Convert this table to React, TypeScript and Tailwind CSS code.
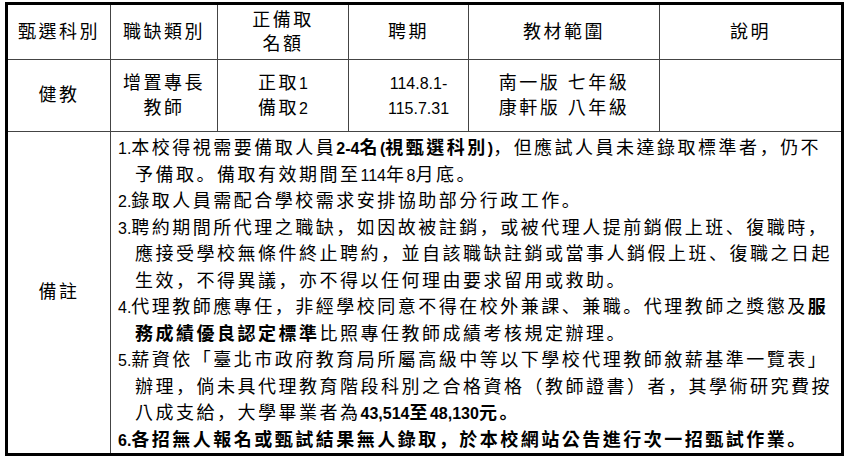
import React from "react";

// Latin runs are set smaller and without the CJK tracking
const L = ({ children, b }: { children: React.ReactNode; b?: boolean }) => (
  <span className={`text-[16px] leading-none tracking-normal ${b ? "font-bold" : ""}`}>{children}</span>
);

// the source sets full-width punctuation low and to the left
const t = (s: string) =>
  s.split(/([，。、])/).map((p, i) =>
    p && "，。、".includes(p) ? (
      <span key={i} className="leading-none font-['Noto_Sans_CJK_JP',sans-serif]">
        {p}
      </span>
    ) : (
      p
    )
  );

const head = "h-[55px] flex items-center justify-center text-center leading-[24px] border-b border-[#444]";
const data = "h-[72px] flex items-center justify-center text-center leading-[25px] border-b border-[#444]";

export default function App() {
  return (
    <div className="w-[847px] h-[460px] bg-white pt-[2px] pl-[5px] font-['Liberation_Sans','Noto_Sans_CJK_TC',sans-serif] text-black">
      <div className="w-[839px] border-[3px] border-black grid grid-cols-[103px_107px_131px_120px_191px_181px] text-[18px] tracking-[2.5px]">
        {/* header */}
        <div className={`${head} border-r`}>甄選科別</div>
        <div className={`${head} border-r`}>職缺類別</div>
        <div className={`${head} border-r`}>
          <div>
            正備取
            <br />
            名額
          </div>
        </div>
        <div className={`${head} border-r`}>聘期</div>
        <div className={`${head} border-r`}>教材範圍</div>
        <div className={head}>說明</div>

        {/* data row */}
        <div className={`${data} border-r`}>健教</div>
        <div className={`${data} border-r`}>
          <div>
            增置專長
            <br />
            教師
          </div>
        </div>
        <div className={`${data} border-r`}>
          <div>
            正取<L>1</L>
            <br />
            備取<L>2</L>
          </div>
        </div>
        <div className={`${data} border-r pl-5`}>
          <div>
            <L>114.8.1-</L>
            <br />
            <L>115.7.31</L>
          </div>
        </div>
        <div className={`${data} border-r`}>
          <div>
            南一版 七年級
            <br />
            康軒版 八年級
          </div>
        </div>
        <div className={data}></div>

        {/* remarks */}
        <div className="h-[321px] flex items-center justify-center border-r border-[#444]">備註</div>
        <div className="col-span-5 h-[321px] pl-[7px] pt-[3px] leading-[26.5px] whitespace-nowrap">
          <div>
            <L>1.</L>本校得視需要備取人員
            <span className="font-bold">
              <L b>2-4</L>名<L b>(</L>視甄選科別<L b>)</L>
            </span>
            {t("，但應試人員未達錄取標準者，仍不")}
          </div>
          <div className="pl-[17px]">
            {t("予備取。備取有效期間至")}<L>114</L>年<L>8</L>{t("月底。")}
          </div>
          <div>
            <L>2.</L>{t("錄取人員需配合學校需求安排協助部分行政工作。")}
          </div>
          <div>
            <L>3.</L>{t("聘約期間所代理之職缺，如因故被註銷，或被代理人提前銷假上班、復職時，")}
          </div>
          <div className="pl-[17px]">
            {t("應接受學校無條件終止聘約，並自該職缺註銷或當事人銷假上班、復職之日起")}
          </div>
          <div className="pl-[17px]">{t("生效，不得異議，亦不得以任何理由要求留用或救助。")}</div>
          <div>
            <L>4.</L>{t("代理教師應專任，非經學校同意不得在校外兼課、兼職。代理教師之獎懲及")}
            <span className="font-bold">服</span>
          </div>
          <div className="pl-[17px]">
            <span className="font-bold">務成績優良認定標準</span>{t("比照專任教師成績考核規定辦理。")}
          </div>
          <div>
            <L>5.</L>薪資依「臺北市政府教育局所屬高級中等以下學校代理教師敘薪基準一覽表」
          </div>
          <div className="pl-[17px]">
            {t("辦理，倘未具代理教育階段科別之合格資格（教師證書）者，其學術研究費按")}
          </div>
          <div className="pl-[17px]">
            {t("八成支給，大學畢業者為")}
            <span className="font-bold">
              <L b>43,514</L>至<L b>48,130</L>{t("元。")}
            </span>
          </div>
          <div className="font-bold">
            <L b>6.</L>{t("各招無人報名或甄試結果無人錄取，於本校網站公告進行次一招甄試作業。")}
          </div>
        </div>
      </div>
    </div>
  );
}
